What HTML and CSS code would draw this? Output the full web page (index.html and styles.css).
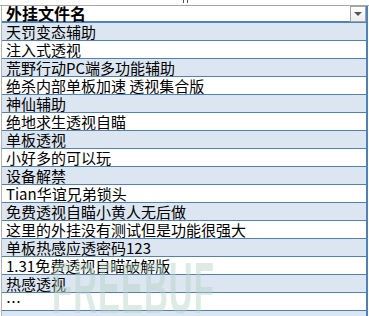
FILE: index.html
```html
<!DOCTYPE html>
<html>
<head>
<meta charset="utf-8">
<link rel="stylesheet" href="styles.css">
</head>
<body>
<div class="sheet">
  <div class="colhead"><span class="mark"></span></div>
  <div class="table">
    <div class="hdr">
      <span class="htext">外挂文件名</span>
      <span class="drop"><span class="tri"></span></span>
    </div>
    <div class="row band">天罚变态辅助</div>
    <div class="row">注入式透视</div>
    <div class="row band">荒野行动PC端多功能辅助</div>
    <div class="row">绝杀内部单板加速 透视集合版</div>
    <div class="row band">神仙辅助</div>
    <div class="row">绝地求生透视自瞄</div>
    <div class="row band">单板透视</div>
    <div class="row">小好多的可以玩</div>
    <div class="row band">设备解禁</div>
    <div class="row">Tian华谊兄弟锁头</div>
    <div class="row band">免费透视自瞄小黄人无后做</div>
    <div class="row">这里的外挂没有测试但是功能很强大</div>
    <div class="row band">单板热感应透密码123</div>
    <div class="row">1.31免费透视自瞄破解版</div>
    <div class="row band">热感透视</div>
    <div class="row">…</div>
    <div class="row band"></div>
  </div>
  <div class="watermark">FREEBUF</div>
</div>
</body>
</html>
```
FILE: styles.css
```css
html, body {
  margin: 0;
  padding: 0;
  background: #ffffff;
  overflow: hidden;
}
.sheet {
  position: relative;
  width: 369px;
  height: 316px;
  overflow: hidden;
  font-family: "Noto Sans CJK SC", "Noto Sans", sans-serif;
  color: #000;
}
.colhead {
  height: 5px;
  border-bottom: 1px solid #a6a6a6;
  display: flex;
  justify-content: flex-start;
  padding-left: 183px;
  box-sizing: content-box;
}
.mark {
  width: 3px;
  height: 3px;
  border-left: 1px solid #555;
  border-right: 1px solid #555;
}
.table {
  margin-left: 1px;
  border-left: 1px solid #b4b4b4;
  width: 364px;
  border-right: 2px solid #4f81bd;
  display: flex;
  flex-direction: column;
}
.hdr {
  height: 15px;
  border-bottom: 2px solid #4f81bd;
  display: flex;
  align-items: center;
  justify-content: space-between;
  padding-left: 4px;
  background: #fff;
}
.htext {
  font-weight: 700;
  font-size: 16px;
  line-height: 15px;
}
.drop {
  width: 14px;
  height: 14px;
  border: 1px solid #a3a3a3;
  background: linear-gradient(#ffffff, #ececec);
  display: flex;
  align-items: center;
  justify-content: center;
  align-self: flex-start;
}
.tri {
  width: 0;
  height: 0;
  border-left: 4px solid transparent;
  border-right: 4px solid transparent;
  border-top: 4px solid #555;
}
.row {
  height: 17px;
  border-bottom: 1px solid #4f81bd;
  padding-left: 4px;
  font-size: 15px;
  line-height: 17px;
  white-space: nowrap;
  background: #fff;
}
.row.band {
  background: #dce6f1;
}
.watermark {
  position: absolute;
  left: 52px;
  top: 252px;
  font-family: "Liberation Sans", sans-serif;
  font-weight: 700;
  font-size: 72px;
  line-height: 72px;
  color: rgba(180, 210, 195, 0.45);
  transform: scaleX(0.46);
  transform-origin: left top;
  letter-spacing: 2px;
  pointer-events: none;
}
```
